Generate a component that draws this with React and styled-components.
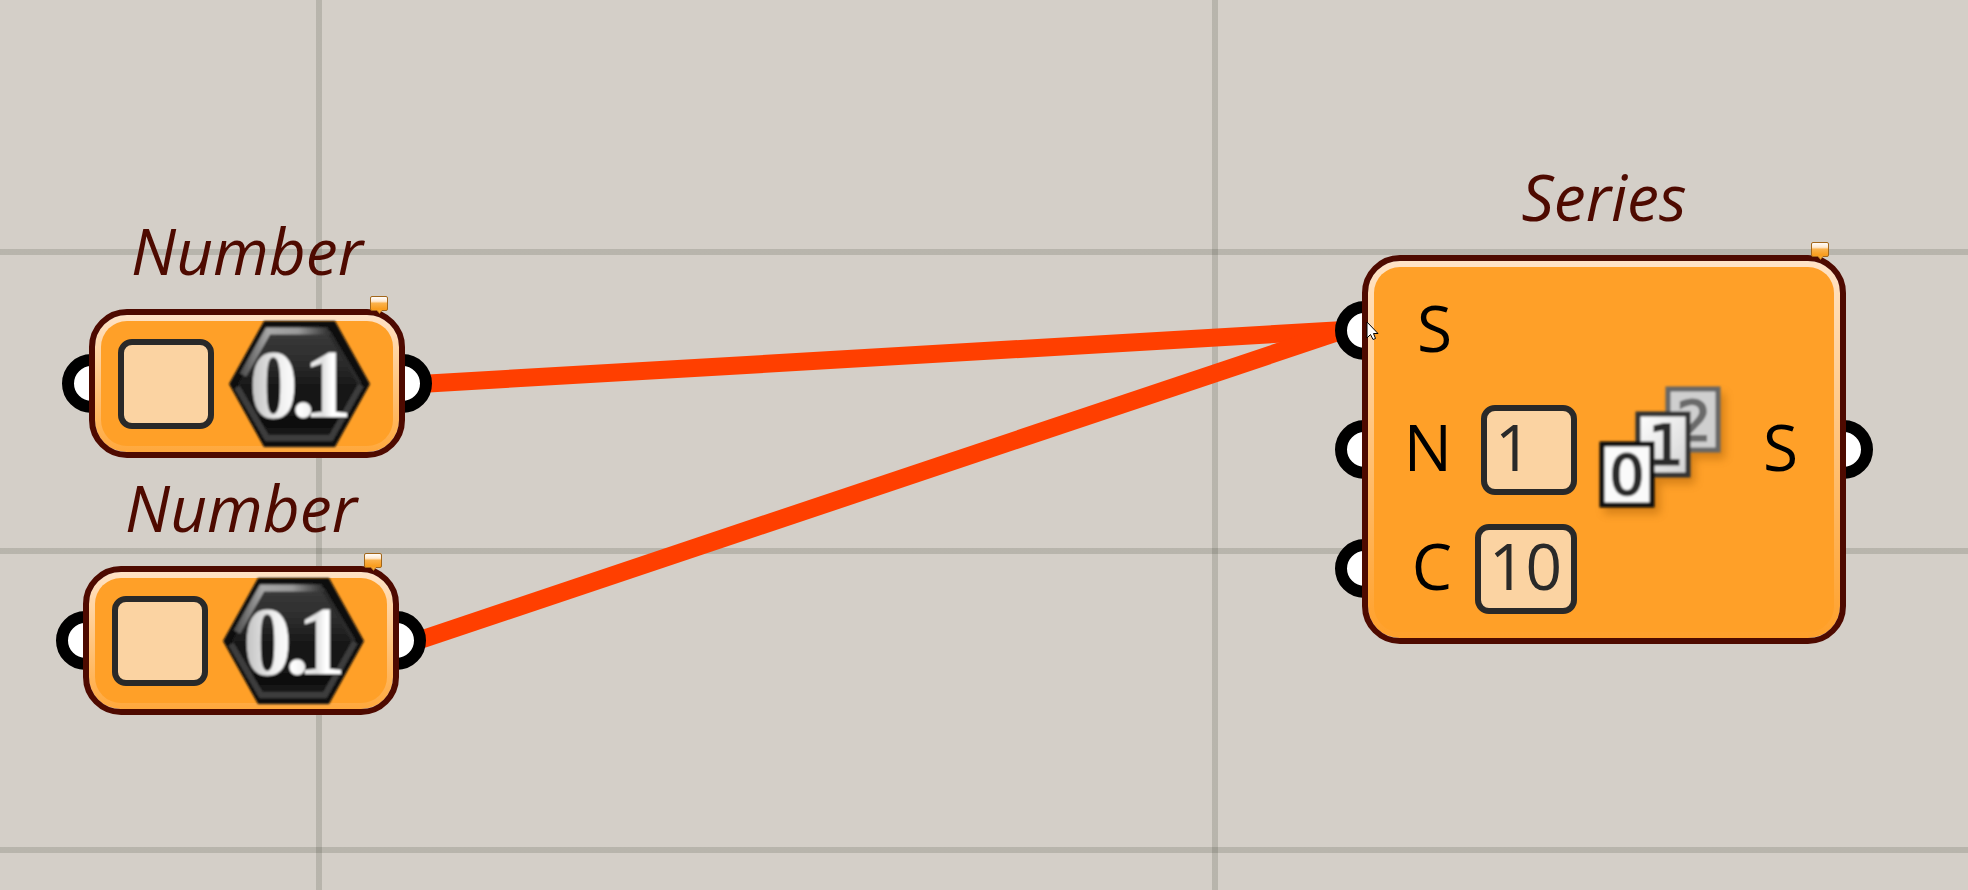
import React from "react";
import styled, { createGlobalStyle } from "styled-components";

const GlobalStyle = createGlobalStyle`
  * { box-sizing: border-box; }
  body {
    margin: 0;
    background: #d4cfc8;
    font-family: "Open Sans", "Noto Sans", sans-serif;
  }
`;

const Canvas = styled.main`
  position: relative;
  min-height: 100vh;
  overflow: hidden;
  background-color: #d4cfc8;
  background-image:
    linear-gradient(to right, rgba(55, 60, 45, 0.18) 6px, transparent 6px),
    linear-gradient(to bottom, rgba(55, 60, 45, 0.18) 6px, transparent 6px);
  background-size: 896px 100%, 100% 299px;
  background-position: 316px 0, 0 249px;
`;

const Wires = styled.svg`
  position: absolute;
  inset: 0;
  width: 100%;
  height: 100%;
  stroke: #ff3f00;
  stroke-width: 18px;
`;

const Node = styled.section`
  position: absolute;
  left: ${(p) => p.$x}px;
  top: ${(p) => p.$y}px;
`;

const Title = styled.h2`
  margin: 0 0 22px;
  font-size: 64px;
  line-height: 72px;
  font-style: italic;
  font-weight: 400;
  text-align: center;
  color: #4e0a00;
`;

const Assembly = styled.div`
  display: flex;
`;

const Ports = styled.div`
  display: flex;
  flex-direction: column;
  justify-content: space-around;
  align-items: ${(p) => (p.$side === "left" ? "flex-start" : "flex-end")};
  width: 27px;
  padding: 16px 0;
`;

const Port = styled.span`
  width: 59px;
  height: 59px;
  flex: none;
  border: 12px solid #000;
  border-radius: 50%;
  background: #fff;
`;

const Body = styled.div`
  position: relative;
  z-index: 1;
  padding: 6px;
  border: 6px solid #4e0a00;
  border-radius: 38px;
  background: linear-gradient(#ffe3c6, ${(p) => p.$rim}) padding-box;
`;

const NumberFace = styled.div`
  display: flex;
  align-items: center;
  gap: 15px;
  padding: 0 22px 0 17px;
  border-radius: 26px;
  background: #ffa028;
`;

const SeriesFace = styled.div`
  display: flex;
  align-items: center;
  padding: 4px 36px 4px 0;
  border-radius: 26px;
  background: #ffa028;
`;

const InputRows = styled.div`
  width: 203px;
`;

const InputRow = styled.div`
  display: flex;
  align-items: center;
  justify-content: space-between;
  height: 119px;
`;

const ParamLabel = styled.label`
  width: 78px;
  padding-bottom: 6px;
  font-size: 64px;
  line-height: 72px;
  text-align: right;
  color: #000;
`;

const OutputLabel = styled.span`
  margin-left: auto;
  padding-bottom: 6px;
  font-size: 64px;
  line-height: 72px;
  color: #000;
`;

const ValueBox = styled.input`
  width: ${(p) => (p.$wide ? 102 : 96)}px;
  height: 90px;
  padding: 0 0 6px 8px;
  border: 6px solid #292929;
  border-radius: 14px;
  background: #fbd3a2;
  font: 64px/72px "Open Sans", "Noto Sans", sans-serif;
  color: #292929;
  outline: none;
`;

const BalloonMark = styled.svg`
  position: absolute;
  top: -19px;
  right: 11px;
`;

const IconSvg = styled.svg`
  display: block;
  flex: none;
  overflow: visible;
`;

const SeriesIconSlot = styled.div`
  width: 186px;
  padding-left: 16px;
`;

const Pointer = styled.svg`
  position: absolute;
  left: 1366px;
  top: 321px;
  z-index: 2;
`;

function Balloon({ id }) {
  return (
    <BalloonMark width="18" height="18" viewBox="0 0 18 18" aria-hidden="true">
      <defs>
        <linearGradient id={id} x1="0" y1="0" x2="0" y2="1">
          <stop offset="0" stopColor="#fff" />
          <stop offset="0.28" stopColor="#ffe9cf" />
          <stop offset="0.4" stopColor="#fbb24b" />
          <stop offset="0.75" stopColor="#f99c1c" />
          <stop offset="1" stopColor="#ffb84e" />
        </linearGradient>
      </defs>
      <path
        d="M2 0.500H16Q17.500 0.500 17.500 2V13Q17.500 14.500 16 14.500H12L9.500 17.500L7 14.500H2Q0.500 14.500 0.500 13V2Q0.500 0.500 2 0.500Z"
        fill={`url(#${id})`}
        stroke="#a2661a"
      />
    </BalloonMark>
  );
}

function NumberIcon({ id }) {
  return (
    <IconSvg width="142" height="125" viewBox="0 0 142 125" role="img" aria-label="Number">
      <defs>
        <linearGradient id={`${id}-face`} x1="0" y1="0" x2="0" y2="1">
          <stop offset="0" stopColor="#3a3a3a" />
          <stop offset="0.3" stopColor="#2c2c2c" />
          <stop offset="0.55" stopColor="#151515" />
          <stop offset="0.8" stopColor="#161616" />
          <stop offset="0.82" stopColor="#050505" />
          <stop offset="1" stopColor="#1c1c1c" />
        </linearGradient>
        <linearGradient id={`${id}-top`} x1="0" y1="0" x2="1" y2="0">
          <stop offset="0" stopColor="#555" />
          <stop offset="0.3" stopColor="#a8a8a8" />
          <stop offset="0.65" stopColor="#9a9a9a" />
          <stop offset="1" stopColor="#333" />
        </linearGradient>
        <linearGradient id={`${id}-ink`} gradientUnits="userSpaceOnUse" x1="20" y1="0" x2="110" y2="0">
          <stop offset="0" stopColor="#bdbdbd" />
          <stop offset="0.35" stopColor="#f0f0f0" />
          <stop offset="0.55" stopColor="#fff" />
          <stop offset="0.82" stopColor="#e0e0e0" />
          <stop offset="0.92" stopColor="#fff" />
        </linearGradient>
        <filter id={`${id}-soft`} x="-5%" y="-5%" width="110%" height="110%">
          <feGaussianBlur stdDeviation="1.300" />
        </filter>
      </defs>
      <g filter={`url(#${id}-soft)`}>
        <path d="M35 0H106L141 63L106 126H35L0 63Z" fill="#0b0b0b" />
        <path d="M40 10H101L131 63L101 116H40L9 63Z" fill={`url(#${id}-face)`} />
        <path d="M14 54L39 10H99" fill="none" stroke={`url(#${id}-top)`} strokeWidth="7" />
        <path d="M101 13L131 63" fill="none" stroke="#2b2b2b" strokeWidth="4" />
        <path d="M8 66L38 117H102L132 64" fill="none" stroke="#3c3c3c" strokeWidth="6" />
        <text
          x="20 62 74"
          y="96"
          fontFamily="Liberation Serif, serif"
          fontWeight="700"
          fontSize="98"
          fill={`url(#${id}-ink)`}
        >
          0.1
        </text>
      </g>
    </IconSvg>
  );
}

function Card({ x, y, edge, fill, ink, digit, cx, base }) {
  return (
    <g>
      <rect x={x + 2} y={y + 2} width="50" height="61" fill={fill} stroke={edge} strokeWidth="5" />
      <text
        x={cx}
        y={base}
        textAnchor="middle"
        fontFamily="DejaVu Sans, sans-serif"
        fontSize="55"
        fill={ink}
        stroke={ink}
        strokeWidth="2"
      >
        {digit}
      </text>
    </g>
  );
}

function SeriesIcon() {
  return (
    <IconSvg width="136" height="140" viewBox="0 0 136 140" role="img" aria-label="Series">
      <defs>
        <filter id="card-soft" x="-5%" y="-5%" width="110%" height="110%">
          <feGaussianBlur stdDeviation="1.300" />
        </filter>
        <filter id="card-shade" x="-10%" y="-10%" width="130%" height="130%">
          <feGaussianBlur stdDeviation="4" />
        </filter>
        <linearGradient id="card-one" x1="0" y1="0" x2="1" y2="1">
          <stop offset="0" stopColor="#fff" />
          <stop offset="1" stopColor="#d2d2d2" />
        </linearGradient>
      </defs>
      <g filter="url(#card-shade)" fill="#9a5200" opacity="0.4">
        <rect x="76" y="13" width="56" height="66" />
        <rect x="46" y="38" width="56" height="66" />
        <rect x="11" y="68" width="56" height="66" />
      </g>
      <g filter="url(#card-soft)">
        <Card x={73} y={7} edge="#666" fill="#cfcfcf" ink="#6a6a6a" digit="2" cx={101} base={60} />
        <Card x={43} y={32} edge="#333" fill="url(#card-one)" ink="#292929" digit="1" cx={73} base={84} />
        <Card x={7} y={62} edge="#0c0c0c" fill="#fafafa" ink="#292929" digit="0" cx={34} base={114} />
      </g>
    </IconSvg>
  );
}

function NumberNode({ x, y, id }) {
  return (
    <Node $x={x} $y={y}>
      <Title>Number</Title>
      <Assembly>
        <Ports $side="left">
          <Port />
        </Ports>
        <Body $rim="#ffa83c">
          <NumberFace>
            <ValueBox type="text" aria-label="Number value" defaultValue="" />
            <NumberIcon id={id} />
          </NumberFace>
          <Balloon id={`${id}-balloon`} />
        </Body>
        <Ports $side="right">
          <Port />
        </Ports>
      </Assembly>
    </Node>
  );
}

export default function App() {
  return (
    <>
      <GlobalStyle />
      <Canvas>
        <Wires aria-hidden="true">
          <line x1="420" y1="384" x2="1344" y2="330" />
          <line x1="417" y1="641" x2="1344" y2="330" />
        </Wires>

        <NumberNode x={62} y={215} id="number-a" />
        <NumberNode x={56} y={472} id="number-b" />

        <Node $x={1335} $y={161}>
          <Title>Series</Title>
          <Assembly>
            <Ports $side="left">
              <Port />
              <Port />
              <Port />
            </Ports>
            <Body $rim="#ffa02a">
              <SeriesFace>
                <InputRows>
                  <InputRow>
                    <ParamLabel as="span">S</ParamLabel>
                  </InputRow>
                  <InputRow>
                    <ParamLabel htmlFor="series-n">N</ParamLabel>
                    <ValueBox id="series-n" type="text" defaultValue="1" />
                  </InputRow>
                  <InputRow>
                    <ParamLabel htmlFor="series-c">C</ParamLabel>
                    <ValueBox id="series-c" type="text" defaultValue="10" $wide />
                  </InputRow>
                </InputRows>
                <SeriesIconSlot>
                  <SeriesIcon />
                </SeriesIconSlot>
                <OutputLabel>S</OutputLabel>
              </SeriesFace>
              <Balloon id="series-balloon" />
            </Body>
            <Ports $side="right">
              <Port />
            </Ports>
          </Assembly>
        </Node>

        <Pointer width="13" height="20" viewBox="0 0 13 20" aria-hidden="true">
          <path
            d="M1 1V17L4.500 13.500L7 18.500L9.500 17.500L7.500 12.500H12Z"
            fill="#fff"
            stroke="#000"
          />
        </Pointer>
      </Canvas>
    </>
  );
}
